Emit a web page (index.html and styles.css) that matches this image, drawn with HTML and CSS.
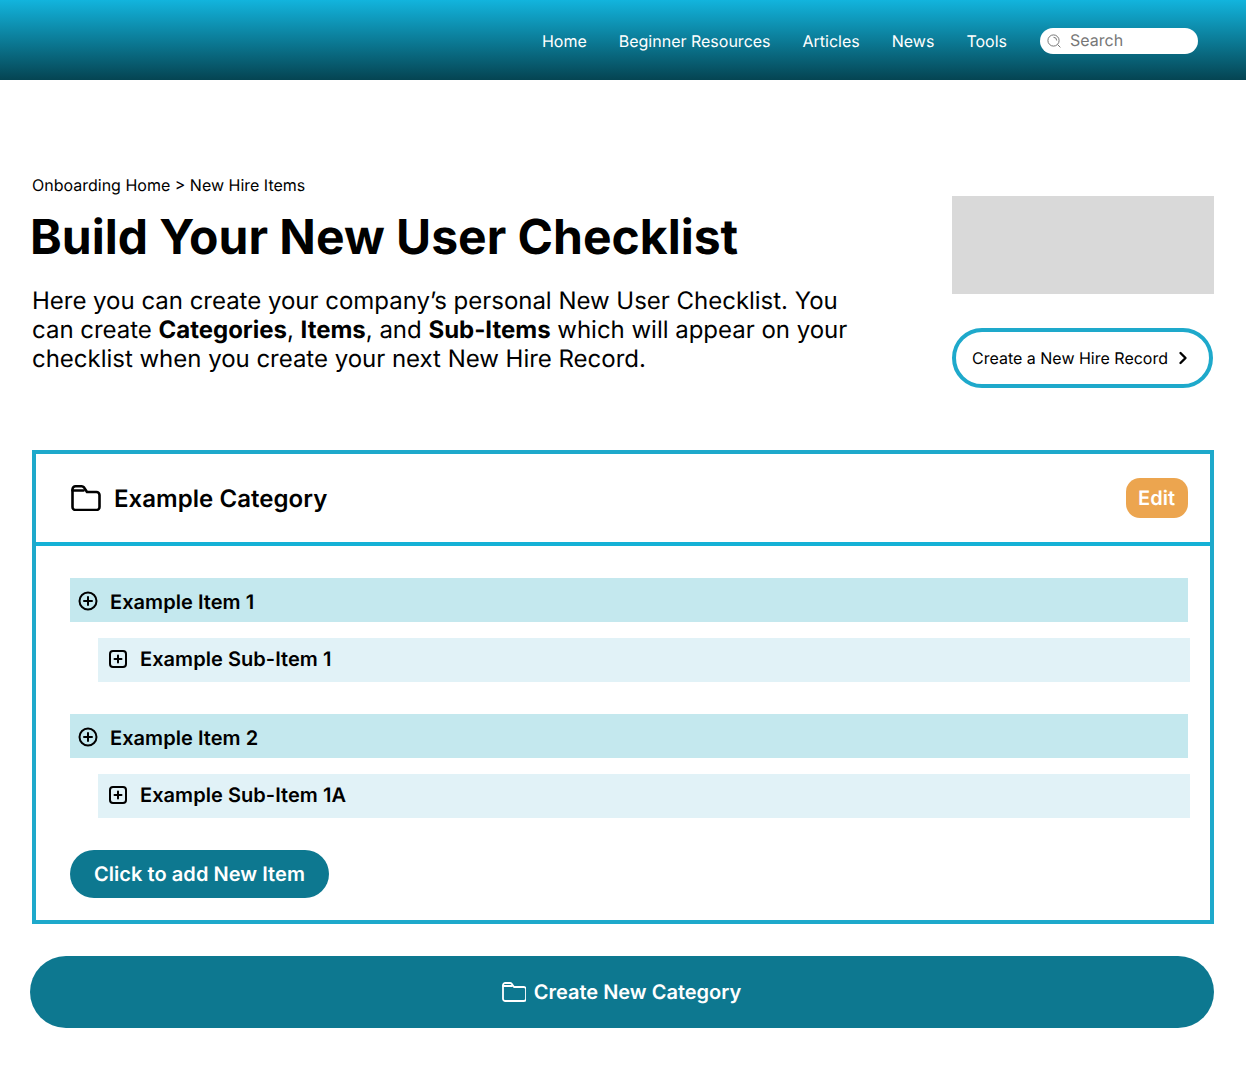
FILE: index.html
```html
<!DOCTYPE html>
<html lang="en">
<head>
    <meta charset="UTF-8">
    <meta name="viewport" content="width=device-width, initial-scale=1.0">
    <title>Build Your New User Checklist</title>
    <link rel="stylesheet" href="styles.css">
</head>
<body>
    <header class="site-header">
        <nav class="site-nav">
            <a href="#">Home</a>
            <a href="#">Beginner Resources</a>
            <a href="#">Articles</a>
            <a href="#">News</a>
            <a href="#">Tools</a>
        </nav>
        <div class="search-box">
            <svg class="search-icon" viewBox="0 0 14 14" width="14" height="14" fill="none" stroke="#777" stroke-width="1">
                <circle cx="6.500" cy="6.500" r="5.600"/>
                <path d="M10.600 10.600l2.800 2.800M6.500 3.300a3.200 3.200 0 0 1 3.200 3.200"/>
            </svg>
            <span>Search</span>
        </div>
    </header>

    <main class="page">
        <section class="intro">
            <div class="intro-text">
                <p class="breadcrumb">Onboarding Home &gt; New Hire Items</p>
                <h1>Build Your New User Checklist</h1>
                <p class="lead">Here you can create your company<span class="apostrophe">’</span>s personal New User Checklist. You can create <strong>Categories</strong>, <strong>Items</strong>, and <strong>Sub-Items</strong> which will appear on your checklist when you create your next New Hire Record.</p>
            </div>
            <div class="intro-side">
                <div class="placeholder"></div>
                <a class="record-btn" href="#">
                    Create a New Hire Record
                    <svg viewBox="0 0 10 14" width="10" height="14" fill="none" stroke="#000" stroke-width="2.400" stroke-linecap="round" stroke-linejoin="round">
                        <path d="M2.500 2l5 5-5 5"/>
                    </svg>
                </a>
            </div>
        </section>

        <section class="category">
            <div class="category-head">
                <svg viewBox="0 0 30 26" width="30" height="26" fill="none" stroke="#000" stroke-width="2.600" stroke-linejoin="round" stroke-linecap="round">
                    <path d="M1.500 4.300a3 3 0 0 1 3-3h6.200c.9 0 1.700.4 2.300 1.100l3 4.600h9.500a3 3 0 0 1 3 3v12a3 3 0 0 1-3 3h-21a3 3 0 0 1-3-3z"/>
                    <path d="M1.500 5.500h11"/>
                </svg>
                <h2>Example Category</h2>
                <a class="edit-btn" href="#">Edit</a>
            </div>
            <div class="category-body">
                <div class="item-group">
                    <div class="item">
                        <svg viewBox="0 0 20 20" width="20" height="20" fill="none" stroke="#000" stroke-width="2" stroke-linecap="round">
                            <circle cx="10" cy="10" r="8.500"/>
                            <path d="M10 6v8M6 10h8"/>
                        </svg>
                        <span>Example Item 1</span>
                    </div>
                    <div class="sub-item">
                        <svg viewBox="0 0 18 18" width="18" height="18" fill="none" stroke="#000" stroke-width="2" stroke-linecap="round">
                            <rect x="1" y="1" width="16" height="16" rx="3"/>
                            <path d="M9 5.500v7M5.500 9h7"/>
                        </svg>
                        <span>Example Sub-Item 1</span>
                    </div>
                </div>
                <div class="item-group">
                    <div class="item">
                        <svg viewBox="0 0 20 20" width="20" height="20" fill="none" stroke="#000" stroke-width="2" stroke-linecap="round">
                            <circle cx="10" cy="10" r="8.500"/>
                            <path d="M10 6v8M6 10h8"/>
                        </svg>
                        <span>Example Item 2</span>
                    </div>
                    <div class="sub-item">
                        <svg viewBox="0 0 18 18" width="18" height="18" fill="none" stroke="#000" stroke-width="2" stroke-linecap="round">
                            <rect x="1" y="1" width="16" height="16" rx="3"/>
                            <path d="M9 5.500v7M5.500 9h7"/>
                        </svg>
                        <span>Example Sub-Item 1A</span>
                    </div>
                </div>
                <a class="add-item-btn" href="#">Click to add New Item</a>
            </div>
        </section>

        <a class="new-category-btn" href="#">
            <svg viewBox="0 0 24 20" width="24" height="20" fill="none" stroke="#fff" stroke-width="1.800" stroke-linejoin="round" stroke-linecap="round">
                <path d="M1 3.300a2.300 2.300 0 0 1 2.300-2.300h4.700c.7 0 1.300.3 1.700.8l2.300 3.200h9.700a2.300 2.300 0 0 1 2.300 2.300v9.400a2.300 2.300 0 0 1-2.300 2.300h-18.400a2.300 2.300 0 0 1-2.300-2.300z"/>
                <path d="M1 4h9"/>
            </svg>
            Create New Category
        </a>
    </main>
</body>
</html>
```

FILE: styles.css
```css
body {
    font-family: Inter, "Liberation Sans", sans-serif;
    margin: 0;
    background-color: #fff;
    color: #000;
    text-rendering: geometricPrecision;
}
a {
    text-decoration: none;
    color: inherit;
}
.site-header {
    display: flex;
    justify-content: flex-end;
    align-items: center;
    box-sizing: border-box;
    height: 80px;
    padding: 2px 48px 0 0;
    background: linear-gradient(180deg, #12b4dd 0%, #054452 100%);
}
.site-nav {
    display: flex;
    gap: 32px;
    margin-right: 33px;
    font-size: 16px;
    font-weight: 400;
    color: #fff;
}
.search-box {
    display: flex;
    align-items: center;
    gap: 9px;
    box-sizing: border-box;
    width: 158px;
    height: 26px;
    padding-left: 7px;
    background: #fff;
    border-radius: 13px;
    font-size: 16px;
    color: #777;
}
.search-box span {
    margin-top: -3px;
}
.page {
    padding: 0 32px;
}
.intro {
    display: flex;
    justify-content: space-between;
    height: 370px;
}
.intro-text {
    width: 830px;
    padding-top: 96px;
}
.breadcrumb {
    margin: 0;
    font-size: 16px;
    line-height: 19px;
}
h1 {
    margin: 13px 0 0 -2px;
    font-size: 48px;
    line-height: 58px;
    font-weight: 700;
}
.lead {
    margin: 20px 0 0;
    font-size: 24px;
    line-height: 29px;
    letter-spacing: -0.02px;
}
.apostrophe {
    letter-spacing: -2px;
}
.intro-side {
    width: 262px;
    padding-top: 116px;
}
.placeholder {
    height: 98px;
    background: #d9d9d9;
}
.record-btn {
    display: flex;
    align-items: center;
    justify-content: center;
    gap: 10px;
    box-sizing: border-box;
    width: 261px;
    height: 60px;
    margin-top: 34px;
    padding-right: 5px;
    border: 4px solid #1ea9cb;
    border-radius: 30px;
    font-size: 16px;
}
.category {
    border: 4px solid #1ea9cb;
}
.category-head {
    display: flex;
    align-items: center;
    height: 88px;
    padding: 0 22px 0 35px;
    border-bottom: 4px solid #15b1d6;
}
.category-head h2 {
    flex: 1;
    margin: 0 0 0 13px;
    font-size: 24px;
    font-weight: 600;
    letter-spacing: 0.05px;
}
.edit-btn {
    padding: 8px 13px 8px 12px;
    background: #eca54f;
    border-radius: 14px;
    color: #fff;
    font-size: 20px;
    line-height: 24px;
    font-weight: 600;
}
.category-body {
    padding: 32px 22px 22px 34px;
}
.item-group {
    margin-bottom: 32px;
}
.item, .sub-item {
    display: flex;
    align-items: center;
    box-sizing: border-box;
    height: 44px;
    font-size: 20px;
    font-weight: 600;
    letter-spacing: 0.05px;
}
.item {
    gap: 12px;
    padding: 2px 0 0 8px;
    background: #c4e8ee;
}
.item span {
    margin-top: 2px;
}
.sub-item {
    gap: 13px;
    margin: 16px -2px 0 28px;
    padding: 0 0 2px 11px;
    background: #e1f2f7;
}
.add-item-btn {
    display: inline-block;
    padding: 12px 24px;
    background: #0d7890;
    border-radius: 24px;
    color: #fff;
    font-size: 20px;
    line-height: 24px;
    font-weight: 600;
    letter-spacing: 0.05px;
}
.new-category-btn {
    display: flex;
    align-items: center;
    justify-content: center;
    gap: 8px;
    height: 72px;
    margin: 32px 0 48px -2px;
    padding-right: 1px;
    background: #0d7890;
    border-radius: 36px;
    color: #fff;
    font-size: 20px;
    font-weight: 600;
}
```
